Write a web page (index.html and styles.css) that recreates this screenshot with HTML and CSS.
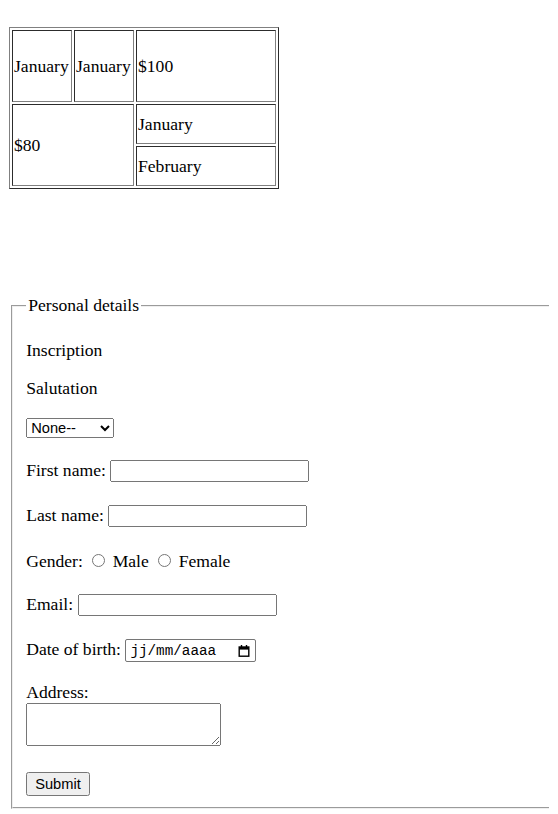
FILE: index.html
```html
<!DOCTYPE html>
<html lang="en">

<head>
    <meta charset="UTF-8">
    <meta name="viewport" content="width=device-width, initial-scale=1.0">
    <title>Personal details</title>
    <link rel="stylesheet" href="styles.css">
</head>

<body>

    <table class="months">
        <tr class="row-tall">
            <td class="month-cell">January</td>
            <td class="month-cell">January</td>
            <td class="wide-cell">$100</td>
        </tr>
        <tr class="row-short">
            <td colspan="2" rowspan="2">$80</td>
            <td>January</td>
        </tr>
        <tr class="row-short">
            <td>February</td>
        </tr>
    </table>

    <form class="details-form">
        <fieldset class="details">
            <legend>Personal details</legend>
            <p>Inscription</p>
            <p>Salutation</p>
            <p>
                <select id="salutation" class="salutation">
                    <option>None--</option>
                    <option>Mr.</option>
                    <option>Mrs.</option>
                    <option>Ms.</option>
                    <option>Dr.</option>
                </select>
            </p>
            <p class="field">
                <label for="firstName">First name:</label>
                <input type="text" id="firstName" class="text-field">
            </p>
            <p class="field">
                <label for="lastName">Last name:</label>
                <input type="text" id="lastName" class="text-field">
            </p>
            <p class="field gender-row">
                Gender:
                <input type="radio" id="male" name="gender" value="male">
                <label for="male">Male</label>
                <input type="radio" id="female" name="gender" value="female">
                <label for="female">Female</label>
            </p>
            <p class="field">
                <label for="email">Email:</label>
                <input type="text" id="email" class="text-field">
            </p>
            <p class="field date-row">
                <label for="dob">Date of birth:</label>
                <span class="date-field">
                    <input type="text" id="dob" placeholder="jj/mm/aaaa">
                    <svg class="calendar-icon" viewBox="0 0 12 12" width="12" height="12">
                        <path d="M3.5 0v2.5M8.5 0v2.5" stroke="#000" stroke-width="1.4" />
                        <rect x="1.2" y="2" width="9.6" height="9.2" fill="none" stroke="#000" stroke-width="1.4" />
                        <rect x="1.2" y="2" width="9.6" height="2.6" fill="#000" />
                    </svg>
                </span>
            </p>
            <p class="field address-row">
                <label for="address">Address:</label><br>
                <textarea id="address" class="address"></textarea>
            </p>
            <button type="submit" class="submit">Submit</button>
        </fieldset>
    </form>

</body>

</html>
```

FILE: styles.css
```css
html {
    overflow: hidden;
}

body {
    margin: 9px;
    padding-top: 18px;
    font-family: "Liberation Serif", "Times New Roman", serif;
    font-size: 17.6px;
    color: #000;
}

.months {
    border: 1px outset #808080;
    border-spacing: 2px;
}

.months td {
    border: 1px inset #808080;
    padding: 1px;
}

.row-tall {
    height: 72px;
}

.row-short {
    height: 40px;
}

.month-cell {
    width: 56px;
}

.wide-cell {
    width: 136px;
}

/* the box is wider than the window, its right edge is cut off */
.details {
    margin: 106px -120px 0 2px;
    padding: 0.35em 0.75em 0.625em;
}

.details legend {
    padding: 0 2px;
}

.field {
    margin: 22.5px 0;
}

.gender-row {
    margin-top: 24px;
}

.date-row {
    margin-bottom: 20px;
}

.address-row {
    margin: 20px 0 21px;
}

input,
select,
textarea,
button {
    font-family: "Liberation Sans", Arial, sans-serif;
    font-size: 14.667px;
}

.salutation {
    width: 88px;
    height: 20px;
}

.text-field {
    box-sizing: border-box;
    width: 199px;
    height: 22px;
}

input[type="radio"] {
    margin: 3px 3px 0 5px;
}

.date-field {
    display: inline-flex;
    align-items: center;
    justify-content: space-between;
    box-sizing: border-box;
    width: 131px;
    height: 23px;
    padding: 0 5px 0 4px;
    border: 1px solid #767676;
    border-radius: 2px;
}

.date-field input {
    width: 90px;
    padding: 0;
    border: 0;
    outline: none;
    font-family: "Liberation Mono", "Courier New", monospace;
    font-size: 14.3px;
}

.date-field input::placeholder {
    color: #000;
}

.address {
    box-sizing: border-box;
    width: 195px;
    height: 43px;
    font-family: "Liberation Mono", monospace;
}

.submit {
    padding: 2px 7px;
}
```
